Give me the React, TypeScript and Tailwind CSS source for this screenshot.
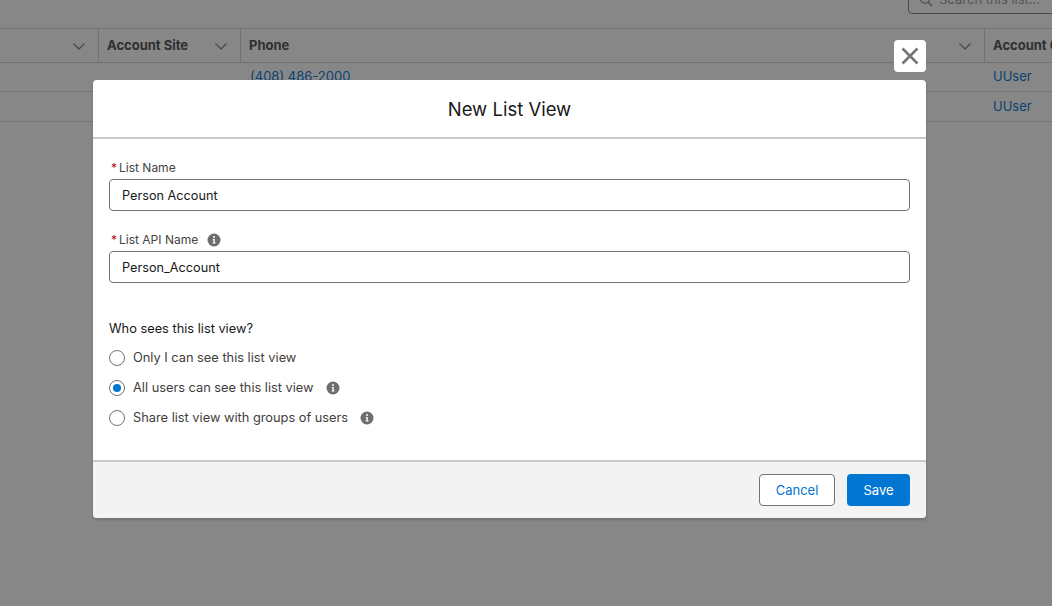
import React from "react";

const Chevron = () => (
  <svg width="14" height="14" viewBox="0 0 14 14" fill="none" className="shrink-0">
    <path d="M1.5 4.5 L7 10 L12.5 4.5" stroke="#4a4a4a" strokeWidth="1.3" />
  </svg>
);

const Info = () => (
  <svg width="14" height="14" viewBox="0 0 14 14" className="shrink-0">
    <circle cx="7" cy="7" r="6.5" fill="#706e6b" />
    <circle cx="7" cy="4.1" r="1" fill="#fff" />
    <path d="M5.8 6.1 H7.8 V9.6 H8.6 V10.6 H5.6 V9.6 H6.4 V7.1 H5.8 Z" fill="#fff" />
  </svg>
);

const Radio = ({ checked }: { checked?: boolean }) => (
  <span className="flex h-[16px] w-[16px] shrink-0 items-center justify-center rounded-full border border-[#747474] bg-white">
    {checked && <span className="h-[8px] w-[8px] rounded-full bg-[#0176d3]" />}
  </span>
);

const Option = ({ label, checked, info }: { label: string; checked?: boolean; info?: boolean }) => (
  <div className="flex h-[30px] items-center">
    <Radio checked={checked} />
    <span className="ml-[8px] text-[12.8px] text-[#3e3e3c]">{label}</span>
    {info && (
      <span className="ml-[12px] flex">
        <Info />
      </span>
    )}
  </div>
);

const Field = ({ label, value, info }: { label: string; value: string; info?: boolean }) => (
  <div>
    <div className="flex h-[18px] items-center text-[12px] text-[#444444]">
      <span className="ml-[2px] mr-[2px] text-[#ba0517]">*</span>
      <span>{label}</span>
      {info && (
        <span className="ml-[9px] flex">
          <Info />
        </span>
      )}
    </div>
    <div className="mt-[2px] flex h-[32px] items-center rounded border border-[#747474] bg-white px-3 pt-px text-[12.7px] text-[#181818]">
      {value}
    </div>
  </div>
);

export default function App() {
  return (
    <div
      className="relative h-[606px] w-[1052px] overflow-hidden bg-[#878787]"
      style={{ fontFamily: "Inter, 'Liberation Sans', sans-serif" }}
    >
      <div className="flex h-[28px] justify-end">
        <div className="-mt-[14px] mr-[-20px] flex h-[28px] w-[164px] shrink-0 items-center gap-[6px] rounded border border-[#4a4a4a] pl-[10px] text-[13px] text-[#555555]">
          <svg width="14" height="14" viewBox="0 0 14 14" fill="none">
            <circle cx="6" cy="6" r="4.3" stroke="#555" strokeWidth="1.5" />
            <path d="M9.2 9.2 L13 13" stroke="#555" strokeWidth="1.7" />
          </svg>
          <span>Search this list...</span>
        </div>
      </div>

      <div className="flex h-[35px] overflow-hidden border-y border-[#727272] text-[13px] font-bold text-[#2f2f2f]">
        <div className="flex w-[98px] shrink-0 items-center justify-end pr-[12px]">
          <Chevron />
        </div>
        <div className="flex w-[142px] shrink-0 items-center justify-between border-l border-[#727272] pl-[8px] pr-[12px]">
          <span>Account Site</span>
          <Chevron />
        </div>
        <div className="flex w-[744px] shrink-0 items-center justify-between border-l border-[#727272] pl-[8px] pr-[12px]">
          <span>Phone</span>
          <Chevron />
        </div>
        <div className="flex w-[90px] shrink-0 items-center border-l border-[#727272] pl-[8px] whitespace-nowrap">
          Account Owner
        </div>
      </div>
      <div className="flex h-[29px] items-center border-b border-[#767676] text-[13px] text-[#0a4272]">
        <span className="ml-[250px] w-[743px] shrink-0">(408) 486-2000</span>
        <span>UUser</span>
      </div>
      <div className="flex h-[30px] items-center border-b border-[#767676] pl-[993px] text-[13px] text-[#0a4272]">
        UUser
      </div>

      <button className="absolute left-[894px] top-[40px] flex h-[32px] w-[32px] items-center justify-center rounded bg-white">
        <svg width="18" height="18" viewBox="0 0 18 18" fill="none">
          <path d="M1.5 1.5 L16.5 16.5 M16.5 1.5 L1.5 16.5" stroke="#747474" strokeWidth="2.6" />
        </svg>
      </button>

      <div className="absolute left-[93px] top-[80px] flex h-[438px] w-[833px] flex-col overflow-hidden rounded bg-white shadow-[0_2px_3px_rgba(0,0,0,0.16)]">
        <div className="flex h-[59px] shrink-0 items-center justify-center border-b-2 border-[#c9c9c9] pt-[2px] text-[18.5px] text-[#181818]">
          New List View
        </div>
        <div className="flex-1 px-4 pt-[20px]">
          <Field label="List Name" value="Person Account" />
          <div className="mt-[20px]">
            <Field label="List API Name" value="Person_Account" info />
          </div>
          <div className="mt-[37px] text-[12.8px] leading-[18px] text-[#181818]">Who sees this list view?</div>
          <div className="mt-[5px]">
            <Option label="Only I can see this list view" />
            <Option label="All users can see this list view" checked info />
            <Option label="Share list view with groups of users" info />
          </div>
        </div>
        <div className="flex h-[58px] shrink-0 items-center justify-end gap-3 border-t-2 border-[#c9c9c9] bg-[#f3f3f3] px-4">
          <button className="h-[32px] w-[76px] rounded border border-[#747474] bg-white pt-px text-[13px] text-[#0176d3]">
            Cancel
          </button>
          <button className="h-[32px] w-[63px] rounded bg-[#0176d3] pt-px text-[13px] text-white">Save</button>
        </div>
      </div>
    </div>
  );
}
